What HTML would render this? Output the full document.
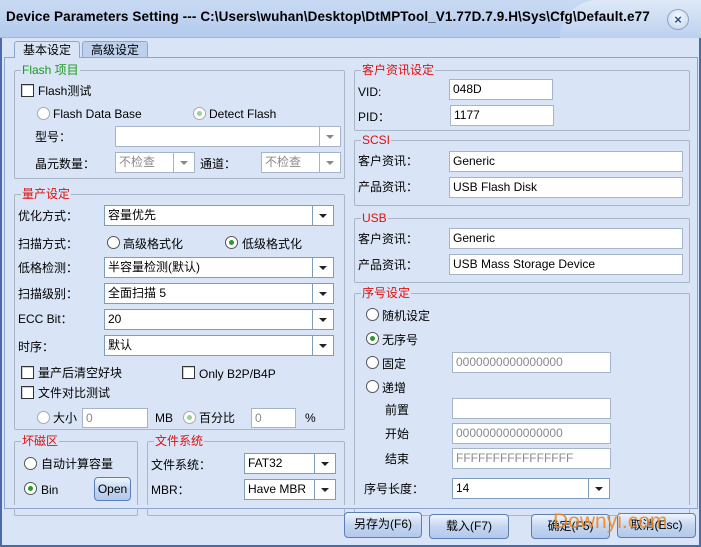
<!DOCTYPE html>
<html><head><meta charset="utf-8"><style>
*{box-sizing:border-box;margin:0;padding:0}
body{width:701px;height:547px;overflow:hidden;background:#d9e5f6;font-family:"Liberation Sans","Noto Sans CJK SC",sans-serif;font-size:12px;color:#000;position:relative}
.a{position:absolute}
.t{position:absolute;white-space:nowrap;line-height:14px}
.g{position:absolute;border:1px solid #a9b6c8;border-radius:2px}
.lg{position:absolute;top:-8px;left:6px;background:#d9e5f6;color:#e01010;padding:0 1px;line-height:14px;font-size:12px}
.in{position:absolute;background:#fff;border:1px solid #a6b4c8;height:21px;line-height:19px;padding-left:3px;white-space:nowrap;overflow:hidden}
.gray{color:#8a8a8a}
.cb{position:absolute;background:#fff;border:1px solid #7f9db9;height:21px;line-height:19px;padding-left:3px;white-space:nowrap}
.cb::after{content:"";position:absolute;right:0;top:0;width:20px;height:19px;border-left:1px solid #7f9db9;background:#fff}
.cb i{position:absolute;right:6px;top:8px;width:0;height:0;border-left:4px solid transparent;border-right:4px solid transparent;border-top:4px solid #222;z-index:2}
.cb.l{border-color:#a6b4c8}.cb.l::after{border-color:#a6b4c8}.cb.l i{border-top-color:#888}
.ck{position:absolute;width:13px;height:13px;border:1px solid #333;background:#fff;box-shadow:inset 1px 1px 0 #ccc}
.rd{position:absolute;width:13px;height:13px;border:1px solid #555;border-radius:50%;background:#fff}
.rd.l{border-color:#aaa}
.rd.on::after{content:"";position:absolute;left:3px;top:3px;width:5px;height:5px;border-radius:50%;background:#2a9a2a}
.rd.l.on::after{background:#9bcf9b}
.bt{position:absolute;border:1px solid #5b7fb5;border-radius:4px;background:linear-gradient(#eef4fd,#c4d6f1 50%,#b3c9eb);text-align:center;line-height:23px;font-size:12px}
</style></head><body>
<div class="a" style="left:0;top:0;width:701px;height:547px;border:2px solid #4a6aa8;border-top:none"></div>
<div class="a" style="left:0;top:0;width:701px;height:38px;background:linear-gradient(#c9daf3,#b4cbee);border-bottom:1px solid #9db6de"></div>
<div class="a" style="left:560px;top:0;width:141px;height:38px;background:linear-gradient(#dfe9f8,#bcd0ee);border-radius:40px 0 0 0"></div>
<div class="t" style="left:6px;top:10px;font-weight:bold;font-size:13.5px;letter-spacing:0.1px">Device Parameters Setting --- C:\Users\wuhan\Desktop\DtMPTool_V1.77D.7.9.H\Sys\Cfg\Default.e77</div>
<div class="a" style="left:667px;top:9px;width:22px;height:21px;border-radius:50%;border:1px solid #8aa3c8;background:radial-gradient(circle at 50% 35%,#f3f7fd,#c3d3ec);text-align:center;line-height:19px;font-weight:bold;color:#2f4f84;font-size:13px">×</div>
<div class="a" style="left:4px;top:57px;width:694px;height:452px;border:1px solid #8ea6cc"></div>
<div class="a" style="left:14px;top:41px;width:66px;height:17px;background:#d9e5f6;border:1px solid #8ea6cc;border-bottom:none;border-radius:3px 3px 0 0"></div>
<div class="t" style="left:23px;top:43px">基本设定</div>
<div class="a" style="left:82px;top:41px;width:66px;height:16px;background:#bdd0ee;border:1px solid #8ea6cc;border-bottom:none;border-radius:3px 3px 0 0"></div>
<div class="t" style="left:91px;top:43px">高级设定</div>

<div class="g" style="left:14px;top:70px;width:331px;height:109px"><span class="lg" style="color:#1a9a1a">Flash 项目</span></div>
<div class="ck" style="left:21px;top:84px"></div><div class="t" style="left:38px;top:84px">Flash测试</div>
<div class="rd l" style="left:37px;top:107px"></div><div class="t" style="left:53px;top:107px">Flash Data Base</div>
<div class="rd l on" style="left:193px;top:107px"></div><div class="t" style="left:209px;top:107px">Detect Flash</div>
<div class="t" style="left:35px;top:130px">型号：</div>
<div class="cb l" style="left:115px;top:126px;width:226px"><i></i></div>
<div class="t" style="left:35px;top:157px">晶元数量：</div>
<div class="cb l gray" style="left:115px;top:152px;width:80px">不检查<i></i></div>
<div class="t" style="left:200px;top:157px">通道：</div>
<div class="cb l gray" style="left:261px;top:152px;width:80px">不检查<i></i></div>

<div class="g" style="left:14px;top:194px;width:331px;height:236px"><span class="lg">量产设定</span></div>
<div class="t" style="left:18px;top:209px">优化方式：</div><div class="cb" style="left:104px;top:205px;width:230px">容量优先<i></i></div>
<div class="t" style="left:18px;top:237px">扫描方式：</div>
<div class="rd" style="left:107px;top:236px"></div><div class="t" style="left:123px;top:237px">高级格式化</div>
<div class="rd on" style="left:225px;top:236px"></div><div class="t" style="left:242px;top:237px">低级格式化</div>
<div class="t" style="left:18px;top:261px">低格检测：</div><div class="cb" style="left:104px;top:257px;width:230px">半容量检测(默认)<i></i></div>
<div class="t" style="left:18px;top:287px">扫描级别：</div><div class="cb" style="left:104px;top:283px;width:230px">全面扫描 5<i></i></div>
<div class="t" style="left:18px;top:312px">ECC Bit：</div><div class="cb" style="left:104px;top:309px;width:230px">20<i></i></div>
<div class="t" style="left:18px;top:340px">时序：</div><div class="cb" style="left:104px;top:335px;width:230px">默认<i></i></div>
<div class="ck" style="left:21px;top:366px"></div><div class="t" style="left:38px;top:366px">量产后清空好块</div>
<div class="ck" style="left:182px;top:366px"></div><div class="t" style="left:199px;top:367px">Only B2P/B4P</div>
<div class="ck" style="left:21px;top:386px"></div><div class="t" style="left:38px;top:386px">文件对比测试</div>
<div class="rd l" style="left:37px;top:411px"></div><div class="t" style="left:53px;top:411px">大小</div>
<div class="in gray" style="left:82px;top:408px;width:66px;height:20px">0</div>
<div class="t" style="left:155px;top:411px">MB</div>
<div class="rd l on" style="left:183px;top:411px"></div><div class="t" style="left:199px;top:411px">百分比</div>
<div class="in gray" style="left:251px;top:408px;width:45px;height:20px">0</div>
<div class="t" style="left:305px;top:411px">%</div>

<div class="g" style="left:14px;top:441px;width:124px;height:75px"><span class="lg">坏磁区</span></div>
<div class="rd" style="left:24px;top:457px"></div><div class="t" style="left:41px;top:457px">自动计算容量</div>
<div class="rd on" style="left:24px;top:482px"></div><div class="t" style="left:41px;top:483px">Bin</div>
<div class="bt" style="left:94px;top:477px;width:37px;height:24px;line-height:22px">Open</div>
<div class="g" style="left:147px;top:441px;width:198px;height:75px"><span class="lg">文件系统</span></div>
<div class="t" style="left:151px;top:458px">文件系统：</div><div class="cb" style="left:244px;top:453px;width:92px">FAT32<i></i></div>
<div class="t" style="left:151px;top:483px">MBR：</div><div class="cb" style="left:244px;top:479px;width:92px">Have MBR<i></i></div>
<div class="a" style="left:5px;top:505px;width:692px;height:3px;background:#d9e5f6"></div>

<div class="g" style="left:354px;top:70px;width:336px;height:61px"><span class="lg">客户资讯设定</span></div>
<div class="t" style="left:358px;top:85px">VID:</div><div class="in" style="left:449px;top:79px;width:104px">048D</div>
<div class="t" style="left:358px;top:110px">PID：</div><div class="in" style="left:450px;top:105px;width:104px">1177</div>
<div class="g" style="left:354px;top:140px;width:336px;height:66px"><span class="lg">SCSI</span></div>
<div class="t" style="left:358px;top:154px">客户资讯：</div><div class="in" style="left:449px;top:151px;width:234px">Generic</div>
<div class="t" style="left:358px;top:180px">产品资讯：</div><div class="in" style="left:449px;top:177px;width:234px">USB Flash Disk</div>
<div class="g" style="left:354px;top:218px;width:336px;height:65px"><span class="lg">USB</span></div>
<div class="t" style="left:358px;top:232px">客户资讯：</div><div class="in" style="left:449px;top:228px;width:234px">Generic</div>
<div class="t" style="left:358px;top:258px">产品资讯：</div><div class="in" style="left:449px;top:254px;width:234px">USB Mass Storage Device</div>
<div class="g" style="left:354px;top:293px;width:336px;height:223px"><span class="lg">序号设定</span></div>
<div class="rd" style="left:366px;top:308px"></div><div class="t" style="left:382px;top:309px">随机设定</div>
<div class="rd on" style="left:366px;top:332px"></div><div class="t" style="left:382px;top:333px">无序号</div>
<div class="rd" style="left:366px;top:356px"></div><div class="t" style="left:382px;top:357px">固定</div>
<div class="in gray" style="left:452px;top:352px;width:159px">0000000000000000</div>
<div class="rd" style="left:366px;top:380px"></div><div class="t" style="left:382px;top:381px">递增</div>
<div class="t" style="left:385px;top:403px">前置</div><div class="in" style="left:452px;top:398px;width:159px"></div>
<div class="t" style="left:385px;top:427px">开始</div><div class="in gray" style="left:452px;top:423px;width:159px">0000000000000000</div>
<div class="t" style="left:385px;top:452px">结束</div><div class="in gray" style="left:452px;top:448px;width:159px">FFFFFFFFFFFFFFFF</div>
<div class="t" style="left:364px;top:482px">序号长度：</div><div class="cb" style="left:452px;top:478px;width:158px">14<i></i></div>
<div class="a" style="left:350px;top:505px;width:347px;height:3px;background:#d9e5f6"></div>

<div class="bt" style="left:344px;top:512px;width:78px;height:26px">另存为(F6)</div>
<div class="bt" style="left:429px;top:514px;width:80px;height:25px">载入(F7)</div>
<div class="bt" style="left:531px;top:514px;width:79px;height:25px">确定(F5)</div>
<div class="bt" style="left:617px;top:513px;width:79px;height:25px">取消(Esc)</div>
<div class="t" style="left:553px;top:510px;font-size:21px;line-height:24px;color:rgba(240,130,20,0.85)">Downyi.com</div>
</body></html>
